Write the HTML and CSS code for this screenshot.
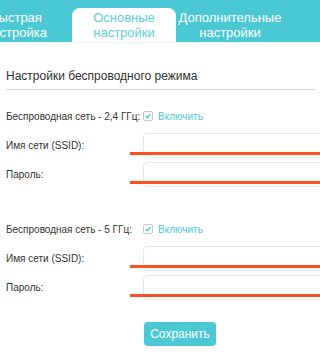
FILE: index.html
```html
<!DOCTYPE html>
<html lang="ru">
<head>
    <meta charset="UTF-8">
    <meta name="viewport" content="width=device-width, initial-scale=1.0">
    <title>Основные настройки</title>
    <link rel="stylesheet" href="styles.css">
</head>
<body>
    <div class="tabs">
        <div class="tab tab-first">Быстрая<br>настройка</div>
        <div class="tab active">Основные<br>настройки</div>
        <div class="tab tab-last">Дополнительные<br>настройки</div>
    </div>

    <div class="content">
        <h3 class="title">Настройки беспроводного режима</h3>

        <div class="section">
            <div class="row switch-row">
                <span class="label">Беспроводная сеть - 2,4 ГГц:</span>
                <label class="check">
                    <svg width="10" height="10" viewBox="0 0 10 10"><rect x="0.5" y="0.5" width="9" height="9" rx="1.5" fill="#fff" stroke="#c8c8c8"/><path d="M2.6 5.2 L4.3 6.8 L7.4 3.3" fill="none" stroke="#4ac9d4" stroke-width="1.3"/></svg>
                    Включить
                </label>
            </div>
            <div class="row field">
                <span class="label">Имя сети (SSID):</span>
                <input type="text" class="input">
                <span class="mark"></span>
            </div>
            <div class="row field">
                <span class="label">Пароль:</span>
                <input type="text" class="input">
                <span class="mark"></span>
            </div>
        </div>

        <div class="section second">
            <div class="row switch-row">
                <span class="label">Беспроводная сеть - 5 ГГц:</span>
                <label class="check">
                    <svg width="10" height="10" viewBox="0 0 10 10"><rect x="0.5" y="0.5" width="9" height="9" rx="1.5" fill="#fff" stroke="#c8c8c8"/><path d="M2.6 5.2 L4.3 6.8 L7.4 3.3" fill="none" stroke="#4ac9d4" stroke-width="1.3"/></svg>
                    Включить
                </label>
            </div>
            <div class="row field">
                <span class="label">Имя сети (SSID):</span>
                <input type="text" class="input">
                <span class="mark"></span>
            </div>
            <div class="row field">
                <span class="label">Пароль:</span>
                <input type="text" class="input">
                <span class="mark"></span>
            </div>
        </div>

        <div class="row actions">
            <span class="label"></span>
            <button class="save">Сохранить</button>
            <span class="mark mark-btn"></span>
        </div>
    </div>
</body>
</html>
```

FILE: styles.css
```css
body {
    margin: 0;
    font-family: 'Liberation Sans', Arial, sans-serif;
    color: #333;
    background: #fff;
    overflow: hidden;
}
.tabs {
    display: flex;
    align-items: flex-end;
    height: 42px;
    background-color: #4ac9d4;
    border-bottom: 1px solid #e4f7f9;
}
.tab {
    width: 104px;
    height: 34px;
    display: flex;
    align-items: center;
    justify-content: center;
    text-align: center;
    font-size: 13px;
    line-height: 15px;
    color: #fff;
    flex-shrink: 0;
}
.tab-first {
    width: 112px;
    margin-left: -40px;
}
.tab-last {
    width: 108px;
}
.tab.active {
    background: #fff;
    color: #5ccfda;
    border-radius: 8px 8px 0 0;
}
.content {
    padding: 0 5px 0 6px;
}
.title {
    margin: 25px 0 0;
    padding-bottom: 5px;
    font-size: 12px;
    line-height: 16px;
    font-weight: normal;
    border-bottom: 1px solid #d6d6d6;
}
.section {
    margin-top: 18px;
}
.section.second {
    margin-top: 34px;
}
.row {
    display: flex;
    align-items: center;
    position: relative;
    font-size: 10px;
    white-space: nowrap;
}
.label {
    width: 137px;
    flex-shrink: 0;
}
.switch-row {
    height: 16px;
    margin-bottom: 9px;
}
.check {
    display: flex;
    align-items: center;
    gap: 5px;
    color: #4ac9d4;
    font-size: 10px;
}
.field {
    margin-top: 4px;
}
.input {
    flex: 1;
    height: 25px;
    box-sizing: border-box;
    margin: 0;
    border: 1px solid #e6e6e6;
    border-radius: 4px;
    background: #fff;
}
.mark {
    position: absolute;
    left: 124px;
    right: -5px;
    top: 19px;
    height: 3px;
    background: #fd5020;
}
.actions {
    margin-top: 22px;
}
.save {
    width: 72px;
    height: 24px;
    margin-left: 1px;
    border: none;
    border-radius: 4px;
    background-color: #4ac9d4;
    color: #fff;
    font-family: 'Liberation Sans', Arial, sans-serif;
    font-size: 12px;
    padding: 0;
}
.mark-btn {
    top: 25px;
    right: auto;
    width: 95px;
}
```
